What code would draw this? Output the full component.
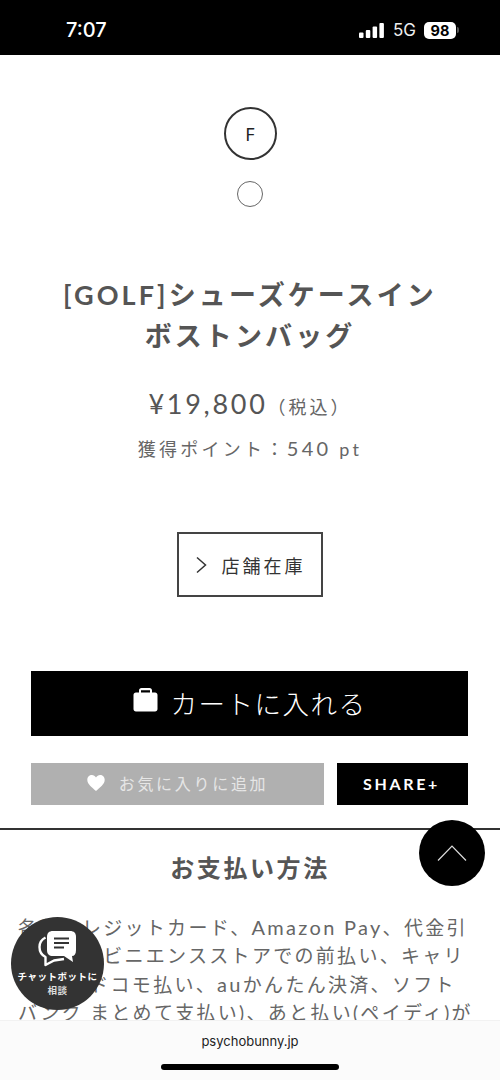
<script>
  // the four lines of the payment text that fit before the browser bar
</script>

<div class="page">
  <header class="status">
    <span class="time">7:07</span>
    <div class="indicators">
      <svg width="26" height="15" viewBox="0 0 26 15">
        <rect x="0" y="9.5" width="4.5" height="5.5" rx="1" fill="#fff" />
        <rect x="6.8" y="7" width="4.5" height="8" rx="1" fill="#fff" />
        <rect x="13.6" y="3.5" width="4.5" height="11.5" rx="1" fill="#fff" />
        <rect x="20.4" y="0" width="4.5" height="15" rx="1" fill="#fff" />
      </svg>
      <span class="net">5G</span>
      <span class="battery">98</span>
      <i class="nub"></i>
    </div>
  </header>

  <main>
    <div class="size">F</div>
    <div class="swatch"></div>
    <h1>[GOLF]シューズケースイン<br />ボストンバッグ</h1>
    <p class="price">¥19,800<small>（税込）</small></p>
    <p class="points">獲得ポイント：<b>540</b> pt</p>
    <button class="stock">
      <svg width="14" height="18" viewBox="0 0 14 18">
        <path d="M2 1.500 L10.500 9 L2 16.500" fill="none" stroke="#333" stroke-width="1.5" />
      </svg>
      店舗在庫
    </button>
    <button class="cart">
      <svg width="25" height="24" viewBox="0 0 25 24">
        <path
          d="M6 4.500V2.500C6 1 7 0 8.500 0h8C18 0 19 1 19 2.500v2h3c1.500 0 2.500 1 2.500 2.500v14c0 1.500-1 2.500-2.500 2.500H3c-1.500 0-2.500-1-2.500-2.500V7C.5 5.500 1.500 4.500 3 4.500zM8 4.500h9V2.200H8z"
          fill="#fff"
          fill-rule="evenodd"
        />
      </svg>
      <span>カートに入れる</span>
    </button>
    <div class="actions">
      <button class="fav">
        <svg width="18" height="16" viewBox="0 0 18 16">
          <path
            d="M9 16 C5 12.500 .3 9.300 .3 4.800 C.3 2 2.400 0 4.900 0 C6.600 0 8.100 .9 9 2.500 C9.900 .9 11.400 0 13.100 0 C15.600 0 17.700 2 17.700 4.800 C17.700 9.300 13 12.500 9 16Z"
            fill="#fff"
          />
        </svg>
        <span>お気に入りに追加</span>
      </button>
      <button class="share">SHARE+</button>
    </div>
    <section class="payment">
      <h2>お支払い方法</h2>
      <p>各種クレジットカード、<span>Amazon Pay</span>、代金引</p>
      <p>換、コンビニエンスストアでの前払い、キャリ</p>
      <p>ア決済(ドコモ払い、<span>au</span>かんたん決済、ソフト</p>
      <p>バンク まとめて支払い)、あと払い(ペイディ)が</p>
    </section>
  </main>

  <button class="top" aria-label="ページトップへ">
    <svg width="30" height="16" viewBox="0 0 30 16">
      <path d="M1 15.500 L15 1 L29 15.500" fill="none" stroke="#ddd" stroke-width="1.200" />
    </svg>
  </button>

  <div class="chat">
    <svg width="42" height="39" viewBox="0 0 42 39">
      <path
        d="M8.500 8.500 C3.500 11 2.500 15 2.500 18 C2.500 22 4.500 26 8.500 28 L8.500 36 L17 31.500 L27 30"
        fill="none"
        stroke="#fff"
        stroke-width="2.400"
        stroke-linejoin="round"
      />
      <path
        d="M16 2 H33 C37 2 39 4 39 8 V21 C39 25 37.500 27 35 27 L36 33 L27 27 H16 C12 27 10 25 10 21 V8 C10 4 12 2 16 2Z"
        fill="#fff"
      />
      <path d="M17 9.500 H32 M17 14 H32 M17 18.500 H27" stroke="#333" stroke-width="1.800" fill="none" />
    </svg>
    <span class="chat-a">チャットボットに</span>
    <span class="chat-b">相談</span>
  </div>

  <footer class="safari">
    <span>psychobunny.jp</span>
    <i class="home"></i>
  </footer>
</div>

<style>
  :global(body) {
    margin: 0;
    background: #fff;
  }
  .page {
    position: relative;
    width: 500px;
    height: 1080px;
    overflow: hidden;
    font-family: "Lato", "Noto Sans CJK JP", sans-serif;
    color: #555;
  }
  button {
    font-family: inherit;
    border: none;
    padding: 0;
    border-radius: 0;
  }
  p,
  h1,
  h2 {
    margin: 0;
  }

  /* status bar */
  .status {
    height: 55px;
    background: #000;
    color: #fff;
    display: flex;
    align-items: center;
    justify-content: space-between;
    padding: 5px 41px 0 66px;
    box-sizing: border-box;
    font-family: "Inter", sans-serif;
  }
  .time {
    font-size: 20px;
    font-weight: 500;
  }
  .indicators {
    display: flex;
    align-items: center;
  }
  .net {
    font-size: 17px;
    margin-left: 8px;
    color: #eee;
  }
  .battery {
    margin-left: 8px;
    width: 32px;
    height: 17px;
    background: #fff;
    color: #000;
    border-radius: 5px;
    font-size: 14.5px;
    font-weight: 700;
    line-height: 17px;
    text-align: center;
  }
  .nub {
    width: 2px;
    height: 6px;
    margin-left: 1px;
    background: #555;
    border-radius: 0 2px 2px 0;
  }

  /* product */
  main {
    display: flex;
    flex-direction: column;
    align-items: center;
    padding-top: 52px;
  }
  .size {
    width: 53px;
    height: 53px;
    box-sizing: border-box;
    border: 2px solid #333;
    border-radius: 50%;
    display: flex;
    align-items: center;
    justify-content: center;
    color: #222;
    font-family: "Noto Sans", sans-serif;
    font-size: 18px;
  }
  .swatch {
    width: 26px;
    height: 26px;
    box-sizing: border-box;
    margin-top: 21px;
    border: 1px solid #666;
    border-radius: 50%;
  }
  h1 {
    margin-top: 67px;
    font-size: 27px;
    line-height: 41px;
    font-weight: 700;
    letter-spacing: 3.100px;
    text-align: center;
    color: #555;
  }
  .price {
    margin-top: 28px;
    font-size: 27px;
    line-height: 40px;
    letter-spacing: 2.700px;
    color: #555;
  }
  .price small {
    font-size: 18px;
    letter-spacing: 3px;
    color: #666;
  }
  .points {
    margin-top: 7px;
    font-size: 18px;
    line-height: 28px;
    letter-spacing: 3.300px;
    color: #666;
  }
  .points b {
    font-size: 20px;
    font-weight: 400;
    letter-spacing: 3.300px;
  }
  .stock {
    margin-top: 69px;
    width: 146px;
    height: 65px;
    box-sizing: border-box;
    background: #fff;
    border: 2px solid #444;
    color: #333;
    display: flex;
    align-items: center;
    justify-content: center;
    gap: 13px;
    font-size: 18px;
    letter-spacing: 3px;
  }
  .cart {
    margin: 74px 1px 0 0;
    width: 437px;
    height: 65px;
    padding-bottom: 3px;
    box-sizing: border-box;
    background: #000;
    color: #fff;
    display: flex;
    align-items: center;
    justify-content: center;
    gap: 13px;
    font-size: 26.500px;
    font-weight: 300;
    letter-spacing: 1.500px;
  }
  .cart svg {
    position: relative;
    top: -2px;
  }
  .actions {
    margin: 27px 1px 0 0;
    width: 437px;
    display: flex;
    gap: 13px;
  }
  .fav {
    width: 293px;
    height: 42px;
    padding-bottom: 2px;
    box-sizing: border-box;
    background: #b0b0b0;
    color: #e6e6e6;
    display: flex;
    align-items: center;
    justify-content: center;
    gap: 14px;
    font-size: 16px;
    letter-spacing: 2.700px;
  }
  .share {
    width: 131px;
    height: 42px;
    padding: 0 2px 2px 0;
    box-sizing: border-box;
    background: #000;
    color: #fff;
    font-size: 16px;
    font-weight: 700;
    letter-spacing: 2.700px;
  }
  .payment {
    margin-top: 23px;
    width: 100%;
    border-top: 2px solid #333;
    box-sizing: border-box;
    padding: 0 18px;
  }
  h2 {
    margin-top: 20px;
    margin-bottom: 27px;
    font-size: 24px;
    line-height: 36px;
    font-weight: 700;
    letter-spacing: 2.600px;
    text-align: center;
    color: #555;
  }
  .payment p {
    font-size: 19px;
    line-height: 28px;
    letter-spacing: 2.300px;
    color: #666;
    white-space: nowrap;
  }
  .payment p span {
    font-size: 20px;
    letter-spacing: 2.300px;
  }

  /* floating things */
  .top {
    position: absolute;
    left: 419px;
    top: 820px;
    width: 66px;
    height: 66px;
    border-radius: 50%;
    background: #000;
    display: flex;
    align-items: center;
    justify-content: center;
  }
  .chat {
    position: absolute;
    left: 11px;
    top: 917px;
    width: 93px;
    height: 93px;
    border-radius: 50%;
    background: #333;
    color: #fff;
    display: flex;
    flex-direction: column;
    align-items: center;
    font-weight: 700;
    font-size: 9.500px;
    letter-spacing: 0.500px;
    line-height: 14px;
    white-space: nowrap;
  }
  .chat svg {
    margin: 12px 0 2px 0;
  }
  .chat-b {
    color: #ddd;
  }
  .safari {
    position: absolute;
    left: 0;
    right: 0;
    bottom: 0;
    height: 60px;
    background: #fbfbfb;
    border-top: 1px solid #f2f2f2;
    box-sizing: border-box;
    text-align: center;
  }
  .safari span {
    display: block;
    margin-top: 11px;
    font-family: "Inter", sans-serif;
    font-size: 13px;
    line-height: 18px;
    color: #222;
  }
  .home {
    position: absolute;
    left: 161px;
    top: 43px;
    width: 178px;
    height: 6px;
    background: #000;
    border-radius: 3px;
  }
</style>
